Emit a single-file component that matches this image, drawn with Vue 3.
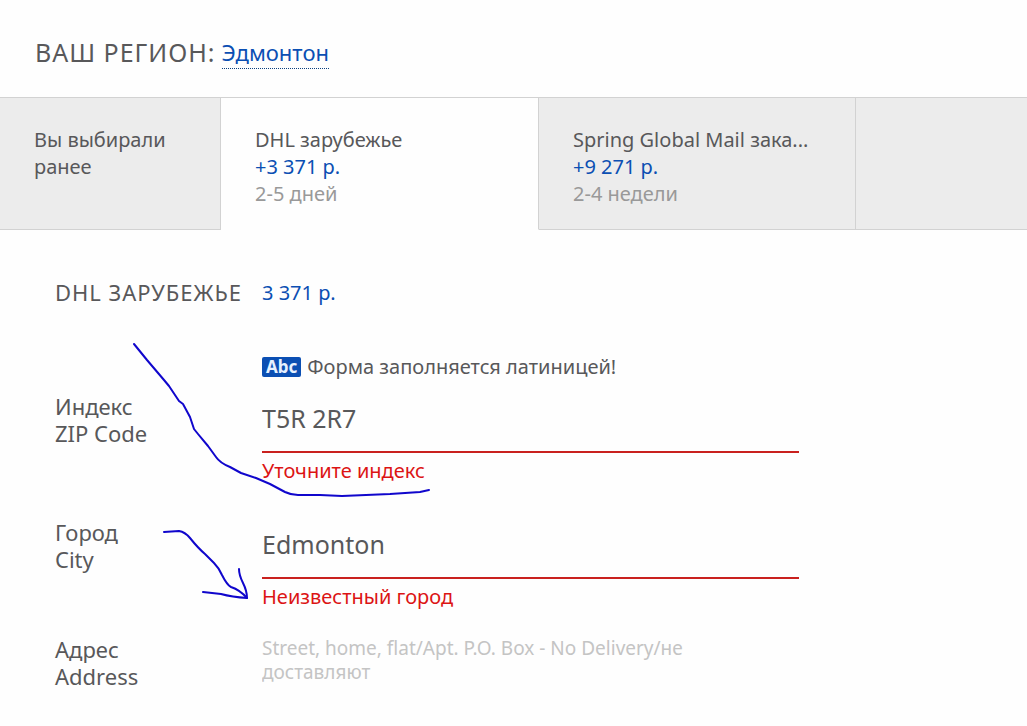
<script setup>
import { ref } from 'vue'

const tabs = [
  { id: 'dhl', name: 'DHL зарубежье', price: '+3 371 р.', term: '2-5 дней' },
  { id: 'spring', name: 'Spring Global Mail зака...', price: '+9 271 р.', term: '2-4 недели' },
]
const active = ref('dhl')
const zip = ref('T5R 2R7')
const city = ref('Edmonton')
const address = ref('')
</script>

<template>
  <main class="page">
    <header class="region">
      <h1 class="region-title">Ваш регион:</h1>
      <a class="region-link" href="#">Эдмонтон</a>
    </header>

    <div class="tabs">
      <p class="tab tab-note">Вы выбирали ранее</p>
      <button
        v-for="tab in tabs"
        :key="tab.id"
        type="button"
        class="tab"
        :class="{ active: tab.id === active }"
        :aria-pressed="tab.id === active"
        @click="active = tab.id"
      >
        <span class="tab-name">{{ tab.name }}</span>
        <span class="tab-price">{{ tab.price }}</span>
        <span class="tab-term">{{ tab.term }}</span>
      </button>
      <div class="tab tab-rest"></div>
    </div>

    <form class="form" @submit.prevent>
      <div class="form-head">
        <h2 class="form-title">DHL зарубежье</h2>
        <span class="form-price">3 371 р.</span>
      </div>

      <p class="hint"><span class="badge">Abc</span><span>Форма заполняется латиницей!</span></p>

      <div class="row">
        <label class="label" for="zip">Индекс<br>ZIP Code</label>
        <div class="field">
          <input id="zip" v-model="zip" class="input" type="text" aria-describedby="zip-error">
          <p id="zip-error" class="error">Уточните индекс</p>
        </div>
      </div>

      <div class="row">
        <label class="label" for="city">Город<br>City</label>
        <div class="field">
          <input id="city" v-model="city" class="input" type="text" aria-describedby="city-error">
          <p id="city-error" class="error">Неизвестный город</p>
        </div>
      </div>

      <div class="row row-address">
        <label class="label" for="address">Адрес<br>Address</label>
        <div class="field">
          <textarea
            id="address"
            v-model="address"
            class="textarea"
            rows="2"
            placeholder="Street, home, flat/Apt. P.O. Box - No Delivery/не доставляют"
          ></textarea>
        </div>
      </div>
    </form>

    <svg class="marks" width="440" height="610" viewBox="0 0 440 610" aria-hidden="true">
      <path d="M134 344 L147 360 L164 380 L169 386 L179 401 L183 404 L190 417 L194 429 L198 434 L208 446 L216 457 Q220 463 230 467 L241 473 L256 478 L270 484 L285 492 Q291 495 298 495 L320 495 L342 496 L366 495 L390 494 L420 492 L429 490" />
      <path d="M164 532 L179 531 Q185 532 190 538 Q198 548 205 554 L214 563 Q219 568 222 575 Q227 585 231 587 Q240 590 247 598" />
      <path d="M239 569 Q239 575 243 583 Q247 591 247 598 Q232 597 221 594 L203 592" />
    </svg>
  </main>
</template>

<style>
body {
  margin: 0;
  background: #fff;
}
</style>

<style scoped>
.page {
  position: relative;
  min-height: 100vh;
  box-sizing: border-box;
  overflow: hidden;
  background: #fefefe;
  color: #58585a;
  font-family: "Noto Sans", "Open Sans", sans-serif;
  font-size: 20px;
  line-height: 27px;
}
h1, h2, p {
  margin: 0;
  font-weight: 400;
}
button, input, textarea {
  font: inherit;
  color: inherit;
  border-radius: 0;
}
.region {
  display: flex;
  align-items: flex-start;
  gap: 6px;
  padding: 36px 35px 28px;
}
.region-title {
  font-size: 25px;
  line-height: 32px;
  letter-spacing: 1px;
  text-transform: uppercase;
}
.region-link {
  color: #0b4fb3;
  font-size: 22px;
  line-height: 32px;
  text-decoration: none;
  border-bottom: 1px dotted #0b3f7f;
}
.tabs {
  display: grid;
  grid-template-columns: 221fr 318fr 317fr 171fr;
  border-top: 1px solid #d2d2d2;
}
.tab {
  box-sizing: border-box;
  min-width: 0;
  padding: 28px 34px 22px;
  border: 0;
  border-right: 1px solid #d2d2d2;
  border-bottom: 1px solid #d2d2d2;
  background: #ececec;
  text-align: left;
}
.tab.active {
  background: #fefefe;
  border-bottom-color: transparent;
}
.tab-rest {
  border-right: 0;
}
.tab span {
  display: block;
}
.tab-name {
  overflow: hidden;
  text-overflow: ellipsis;
  white-space: nowrap;
}
.tab-price,
.form-price {
  color: #0b4fb3;
}
.tab-term {
  color: #999;
}
.form {
  padding: 49px 55px 24px;
}
.form-head {
  display: flex;
  gap: 20px;
}
.form-title {
  font-size: 22px;
  line-height: 27px;
  letter-spacing: 1px;
  text-transform: uppercase;
}
.hint {
  display: flex;
  align-items: center;
  gap: 6px;
  margin: 47px 0 13px 207px;
}
.badge {
  padding: 0 4px;
  border-radius: 2px;
  background: #0b4fb3;
  color: #e6f1ff;
  font-size: 17px;
  font-weight: 700;
  line-height: 20px;
}
.row {
  display: grid;
  grid-template-columns: 207px minmax(0, 537px);
  margin-bottom: 35px;
}
.row-address {
  margin: -9px 0 0;
}
.label {
  font-size: 22px;
}
.input {
  display: block;
  box-sizing: border-box;
  width: 100%;
  height: 60px;
  padding: 0 0 8px;
  border: 0;
  border-bottom: 2px solid #c9211e;
  background: transparent;
  font-size: 25px;
  outline: 0;
}
.error {
  margin-top: 4px;
  color: #dc1414;
}
.textarea {
  display: block;
  box-sizing: border-box;
  width: 100%;
  max-width: 430px;
  height: 48px;
  padding: 0;
  border: 0;
  background: transparent;
  font-size: 19px;
  line-height: 24px;
  resize: none;
  overflow: hidden;
  outline: 0;
}
.textarea::placeholder {
  color: #c4c4c4;
  opacity: 1;
}
.marks {
  position: absolute;
  top: 0;
  left: 0;
  pointer-events: none;
  fill: none;
  stroke: #1006cc;
  stroke-width: 2;
  stroke-linecap: round;
  stroke-linejoin: round;
}
</style>
